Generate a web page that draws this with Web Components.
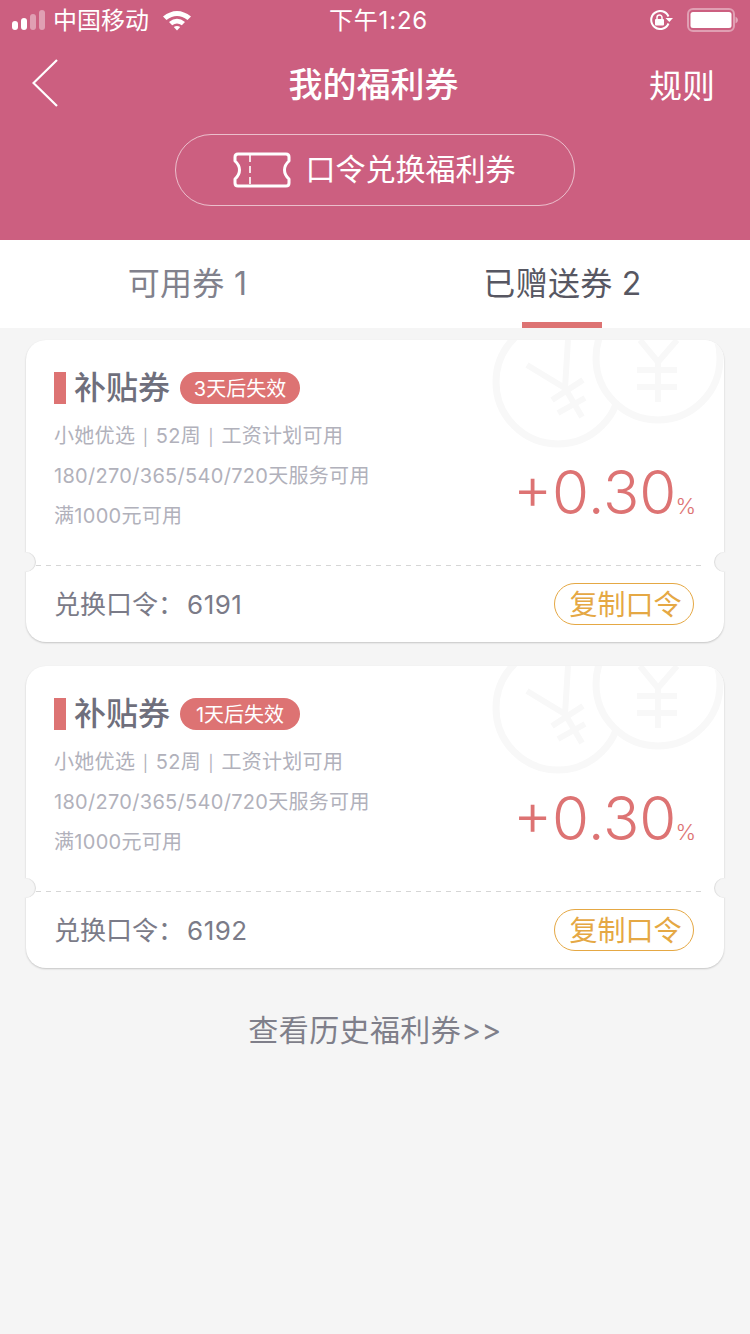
<!DOCTYPE html>
<html>
<head>
<meta charset="utf-8">
<style>
  html, body { margin: 0; padding: 0; background: #f5f5f5; }
  body { font-family: Inter, "Noto Sans CJK SC", sans-serif; }
  coupon-card + coupon-card { margin-top: 24px; }
</style>
</head>
<body>
<app-header title="我的福利券" action="规则" redeem="口令兑换福利券"></app-header>
<tab-bar first="可用券 1" second="已赠送券 2"></tab-bar>
<coupon-list>
  <coupon-card days="3天后失效" code="6191"></coupon-card>
  <coupon-card days="1天后失效" code="6192"></coupon-card>
</coupon-list>
<history-link>查看历史福利券&gt;&gt;</history-link>

<script>
class StatusBar extends HTMLElement {
  constructor() {
    super();
    this.shadowDOM = this.attachShadow({ mode: "open" });
    this.shadowDOM.innerHTML = `
      <style>
        :host {
          display: grid;
          grid-template-columns: 1fr auto 1fr;
          align-items: center;
          height: 40px;
          color: #fff;
          font-size: 24px;
        }
        .left, .right { display: flex; align-items: center; }
        .left { padding-left: 12px; }
        .right { justify-content: flex-end; padding-right: 12px; }
        .signal { display: flex; align-items: flex-end; gap: 3px; margin-right: 8px; }
        .signal i { display: block; width: 6px; border-radius: 3px; background: #fff; }
        .signal i.off { background: rgba(255,255,255,.4); }
        .carrier { margin-right: 13px; padding-bottom: 3px; }
        .time { font-size: 24px; letter-spacing: .8px; padding: 0 0 3px 7px; }
        .lock { margin-right: 14px; }
      </style>
      <div class="left">
        <div class="signal">
          <i style="height:9px"></i><i style="height:12px"></i><i class="off" style="height:16px"></i><i class="off" style="height:20px"></i>
        </div>
        <span class="carrier">中国移动</span>
        <svg width="30" height="22" viewBox="0 0 30 22">
          <path d="M1 7.500 Q15 -3.500 29 7.500 L25.500 11 Q15 3.200 4.500 11Z" fill="#fff"/>
          <path d="M7 13 Q15 6.500 23 13 L19.800 16.200 Q15 12.800 10.200 16.200Z" fill="#fff"/>
          <path d="M11.800 18 Q15 15.800 18.200 18 L15 21.500Z" fill="#fff"/>
        </svg>
      </div>
      <span class="time">下午1:26</span>
      <div class="right">
        <svg class="lock" width="24" height="20" viewBox="0 0 24 20">
          <path d="M19.500 6.500 A9 9 0 1 0 19.500 13.500" fill="none" stroke="#fff" stroke-width="2"/>
          <path d="M16.500 8 L24 8 L20.300 12Z" fill="#fff"/>
          <rect x="6" y="9" width="9" height="6.500" rx="1" fill="#fff"/>
          <path d="M8 9 V7.500 A2.500 2.500 0 0 1 13 7.500 V9" fill="none" stroke="#fff" stroke-width="1.500"/>
        </svg>
        <svg width="51" height="24" viewBox="0 0 51 24">
          <rect x="1" y="1" width="46" height="22" rx="5" fill="none" stroke="#fff" stroke-opacity=".4" stroke-width="2"/>
          <rect x="3.500" y="4" width="41" height="16" rx="2.500" fill="#fff"/>
          <path d="M48.500 8.500 Q51 10 51 12 Q51 14 48.500 15.500Z" fill="#fff" fill-opacity=".45"/>
        </svg>
      </div>
    `;
  }
}

class AppHeader extends HTMLElement {
  constructor() {
    super();
    this.shadowDOM = this.attachShadow({ mode: "open" });
  }

  connectedCallback() {
    this.shadowDOM.innerHTML = `
      <style>
        :host {
          display: block;
          height: 240px;
          background: #cc5f80;
          color: #fff;
        }
        .nav {
          display: grid;
          grid-template-columns: 1fr auto 1fr;
          align-items: center;
          height: 90px;
          padding: 0 35px 0 32px;
        }
        .nav svg { display: block; margin-bottom: 4px; }
        h1 { margin: 0; font-size: 34px; font-weight: 500; line-height: 90px; }
        .action { justify-self: end; font-size: 33px; padding-bottom: 3px; }
        .redeem {
          display: flex;
          align-items: center;
          justify-content: center;
          gap: 15px;
          box-sizing: border-box;
          width: 400px;
          height: 72px;
          margin: 4px auto 0;
          padding-right: 2px;
          border: 1px solid rgba(255,255,255,.6);
          border-radius: 36px;
          font-size: 30px;
        }
        .redeem span { padding-bottom: 6px; }
      </style>
      <status-bar></status-bar>
      <div class="nav">
        <svg width="26" height="48" viewBox="0 0 26 48">
          <path d="M25 1 L1.500 24 L25 47" fill="none" stroke="#fff" stroke-width="2.200"/>
        </svg>
        <h1>${this.getAttribute("title")}</h1>
        <span class="action">${this.getAttribute("action")}</span>
      </div>
      <div class="redeem">
        <svg width="58" height="36" viewBox="0 0 58 36">
          <path d="M5 2 H53 Q56 2 56 5 V9 Q51.500 13 51.500 18 Q51.500 23 56 27 V31 Q56 34 53 34 H5 Q2 34 2 31 V27 Q6.500 23 6.500 18 Q6.500 13 2 9 V5 Q2 2 5 2Z" fill="none" stroke="#fff" stroke-width="3" stroke-linejoin="round"/>
          <path d="M17 3 V33" fill="none" stroke="#fff" stroke-width="1.600" stroke-dasharray="7 4"/>
        </svg>
        <span>${this.getAttribute("redeem")}</span>
      </div>
    `;
  }
}

class TabBar extends HTMLElement {
  constructor() {
    super();
    this.shadowDOM = this.attachShadow({ mode: "open" });
  }

  connectedCallback() {
    this.shadowDOM.innerHTML = `
      <style>
        :host {
          display: flex;
          height: 88px;
          background: #fff;
          font-size: 32px;
          letter-spacing: .3px;
        }
        .tab {
          position: relative;
          flex: 1;
          display: flex;
          align-items: center;
          justify-content: center;
          padding-bottom: 7px;
          color: #81818c;
        }
        .tab.active { color: #575762; }
        .tab.active::after {
          content: "";
          position: absolute;
          left: 147px;
          bottom: 0;
          width: 80px;
          height: 6px;
          background: #dd7373;
        }
      </style>
      <div class="tab">${this.getAttribute("first")}</div>
      <div class="tab active">${this.getAttribute("second")}</div>
    `;
  }
}

class CouponList extends HTMLElement {
  constructor() {
    super();
    this.shadowDOM = this.attachShadow({ mode: "open" });
    this.shadowDOM.innerHTML = `
      <style>
        :host { display: block; padding: 12px 26px 0; }
      </style>
      <slot></slot>
    `;
  }
}

class CouponCard extends HTMLElement {
  constructor() {
    super();
    this.shadowDOM = this.attachShadow({ mode: "open" });
  }

  connectedCallback() {
    this.shadowDOM.innerHTML = `
      <style>
        :host {
          display: block;
          position: relative;
          height: 302px;
          border-radius: 20px;
          background: #fff;
          box-shadow: 0 1px 2px rgba(0,0,0,.2);
        }
        .mark {
          position: absolute;
          top: 0;
          left: 0;
          width: 100%;
          height: 120px;
          overflow: hidden;
          border-radius: 20px 20px 0 0;
        }
        .top {
          position: relative;
          display: flex;
          justify-content: space-between;
          box-sizing: border-box;
          height: 225px;
          padding: 32px 28px 0;
        }
        .head { display: flex; align-items: center; height: 32px; margin-bottom: 12px; }
        .head i { width: 12px; height: 32px; margin-right: 8px; background: #dd7373; }
        .head b { font-size: 32px; font-weight: 500; color: #6f6f7c; padding-bottom: 6px; }
        .badge {
          display: flex;
          align-items: center;
          justify-content: center;
          box-sizing: border-box;
          width: 120px;
          height: 32px;
          margin-left: 10px;
          padding-bottom: 2px;
          border-radius: 16px;
          background: #dd7373;
          color: #fff;
          font-size: 20px;
        }
        .line {
          height: 40px;
          font-size: 20px;
          line-height: 40px;
          letter-spacing: .3px;
          word-spacing: 1.500px;
          color: #b1b1bb;
          white-space: nowrap;
        }
        .line span { font-size: 16px; line-height: 1; }
        .amount {
          align-self: flex-end;
          margin-bottom: 24px;
          color: #dd7373;
          font-size: 60px;
          font-weight: 300;
          line-height: 70px;
          white-space: nowrap;
        }
        .amount small { font-size: 22px; margin-left: -1px; }
        .bottom {
          position: relative;
          display: flex;
          align-items: center;
          justify-content: space-between;
          height: 77px;
          margin: 0 20px 0 10px;
          padding: 0 10px 0 18px;
          background: repeating-linear-gradient(90deg, #d6d6d6 0 5px, transparent 5px 10px) top left / 100% 1px no-repeat;
          font-size: 26px;
          color: #7b7b88;
        }
        .code { padding-bottom: 3px; }
        .code em { font-style: normal; margin-left: 3px; letter-spacing: .5px; }
        .copy {
          display: flex;
          align-items: center;
          justify-content: center;
          box-sizing: border-box;
          width: 140px;
          height: 42px;
          padding: 0 0 2px 3px;
          border: 1px solid #e5a844;
          border-radius: 21px;
          color: #e5a844;
          font-size: 28px;
        }
        .notch {
          position: absolute;
          top: 212px;
          width: 12px;
          height: 20px;
          background: #f5f5f5;
        }
        .notch.l { left: -2px; border-radius: 0 10px 10px 0; box-shadow: inset -1px 0 1px rgba(0,0,0,.1); }
        .notch.r { right: -2px; border-radius: 10px 0 0 10px; box-shadow: inset 1px 0 1px rgba(0,0,0,.1); }
      </style>
      <div class="mark">
        <svg width="698" height="120" viewBox="26 340 698 120" fill="none" stroke="#f8f8f8">
          <circle cx="558" cy="382" r="62" stroke-width="7"/>
          <path d="M527 365 L565 388 L568 340 M565 388 L582 417 M552 400 L583 380 M558 413 L585 398" stroke-width="6"/>
          <circle cx="658" cy="358" r="62" stroke-width="7" fill="#fff"/>
          <path d="M640 340 L658 362 L677 340 M658 362 V402 M637 370 H677 M637 387 H677" stroke-width="6"/>
        </svg>
      </div>
      <div class="top">
        <div>
          <div class="head"><i></i><b>补贴券</b><span class="badge">${this.getAttribute("days")}</span></div>
          <div class="line">小她优选 <span>|</span> 52周 <span>|</span> 工资计划可用</div>
          <div class="line">180/270/365/540/720天服务可用</div>
          <div class="line">满1000元可用</div>
        </div>
        <div class="amount">+0.30<small>%</small></div>
      </div>
      <div class="bottom">
        <span class="code">兑换口令：<em>${this.getAttribute("code")}</em></span>
        <span class="copy">复制口令</span>
      </div>
      <span class="notch l"></span>
      <span class="notch r"></span>
    `;
  }
}

class HistoryLink extends HTMLElement {
  constructor() {
    super();
    this.shadowDOM = this.attachShadow({ mode: "open" });
    this.shadowDOM.innerHTML = `
      <style>
        :host {
          display: block;
          margin-top: 38px;
          text-align: center;
          font-size: 30px;
          line-height: 48px;
          letter-spacing: .4px;
          color: #7f7f8a;
        }
      </style>
      <slot></slot>
    `;
  }
}

customElements.define("status-bar", StatusBar);
customElements.define("app-header", AppHeader);
customElements.define("tab-bar", TabBar);
customElements.define("coupon-list", CouponList);
customElements.define("coupon-card", CouponCard);
customElements.define("history-link", HistoryLink);
</script>
</body>
</html>
